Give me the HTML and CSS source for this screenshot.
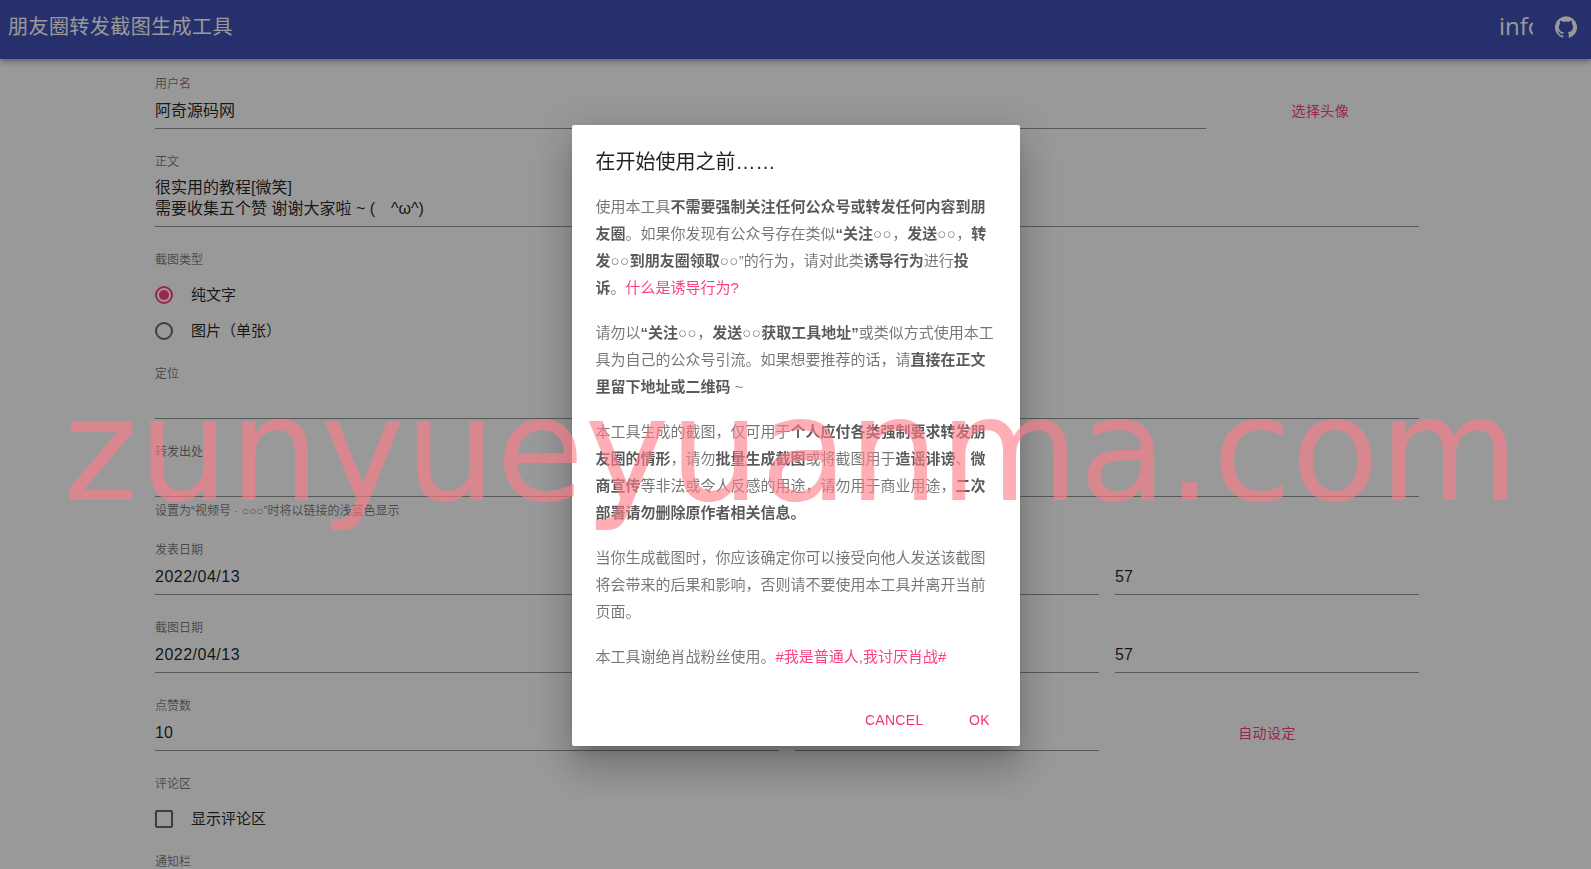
FILE: index.html
```html
<!DOCTYPE html>
<html lang="zh-CN">
  <head>
    <meta charset="UTF-8" />
    <meta name="viewport" content="width=device-width, initial-scale=1.0" />
    <title>朋友圈转发截图生成工具</title>
    <link rel="stylesheet" href="styles.css">
  </head>
  <body>
    <header class="appbar">
      <h1 class="appbar-title">朋友圈转发截图生成工具</h1>
      <span class="appbar-info">info</span>
      <svg class="appbar-github" viewBox="0 0 24 24">
        <path d="M12 .3a12 12 0 0 0-3.8 23.4c.6.1.8-.3.8-.6v-2c-3.3.7-4-1.6-4-1.6-.6-1.4-1.4-1.8-1.4-1.8-1-.7.1-.7.1-.7 1.2 0 1.9 1.2 1.9 1.2 1 1.8 2.8 1.3 3.5 1 0-.8.4-1.3.7-1.6-2.7-.3-5.5-1.3-5.5-6 0-1.2.5-2.3 1.3-3.1-.2-.4-.6-1.6 0-3.2 0 0 1-.3 3.4 1.2a11.5 11.5 0 0 1 6 0c2.3-1.5 3.3-1.2 3.3-1.2.6 1.6.2 2.8 0 3.2.9.8 1.3 1.9 1.3 3.2 0 4.6-2.8 5.6-5.5 5.9.5.4.9 1 .9 2.2v3.3c0 .3.1.7.8.6A12 12 0 0 0 12 .3" />
      </svg>
    </header>

    <main class="form">
      <div class="row">
        <div class="field span-10">
          <label class="field-label">用户名</label>
          <div class="field-value">阿奇源码网</div>
        </div>
        <div class="action span-2"><a class="text-button">选择头像</a></div>
      </div>

      <div class="row">
        <div class="field span-12">
          <label class="field-label">正文</label>
          <div class="field-value multiline">很实用的教程[微笑]<br />需要收集五个赞 谢谢大家啦 ~ (　^ω^)</div>
        </div>
      </div>

      <div class="group">
        <div class="field-label">截图类型</div>
        <div class="choice"><span class="radio checked"></span><span class="choice-text">纯文字</span></div>
        <div class="choice"><span class="radio"></span><span class="choice-text">图片（单张）</span></div>
      </div>

      <div class="row">
        <div class="field span-12">
          <label class="field-label">定位</label>
          <div class="field-value"></div>
        </div>
      </div>

      <div class="row with-help">
        <div class="field span-12">
          <label class="field-label">转发出处</label>
          <div class="field-value"></div>
          <p class="field-help">设置为“视频号 · ○○○”时将以链接的浅蓝色显示</p>
        </div>
      </div>

      <div class="row">
        <div class="field span-6">
          <label class="field-label">发表日期</label>
          <div class="field-value date">2022/04/13</div>
        </div>
        <div class="field span-3">
          <label class="field-label"></label>
          <div class="field-value"></div>
        </div>
        <div class="field span-3">
          <label class="field-label"></label>
          <div class="field-value">57</div>
        </div>
      </div>

      <div class="row">
        <div class="field span-6">
          <label class="field-label">截图日期</label>
          <div class="field-value date">2022/04/13</div>
        </div>
        <div class="field span-3">
          <label class="field-label"></label>
          <div class="field-value"></div>
        </div>
        <div class="field span-3">
          <label class="field-label"></label>
          <div class="field-value">57</div>
        </div>
      </div>

      <div class="row">
        <div class="field span-6">
          <label class="field-label">点赞数</label>
          <div class="field-value">10</div>
        </div>
        <div class="field span-3">
          <label class="field-label"></label>
          <div class="field-value"></div>
        </div>
        <div class="action span-3"><a class="text-button">自动设定</a></div>
      </div>

      <div class="group">
        <div class="field-label">评论区</div>
        <div class="choice"><span class="checkbox"></span><span class="choice-text">显示评论区</span></div>
      </div>

      <div class="group">
        <div class="field-label">通知栏</div>
      </div>
    </main>

    <div class="backdrop">
      <section class="dialog">
        <h2 class="dialog-title">在开始使用之前……</h2>
        <div class="dialog-body">
          <p>使用本工具<b>不需要强制关注任何公众号或转发任何内容到朋友圈</b>。如果你发现有公众号存在类似<b>“关注</b><i>○○</i>，<b>发送</b><i>○○</i>，<b>转发</b><i>○○</i><b>到朋友圈领取</b><i>○○</i>”的行为，请对此类<b>诱导行为</b>进行<b>投诉</b>。<a>什么是诱导行为?</a></p>
          <p>请勿以<b>“关注</b><i>○○</i>，<b>发送</b><i>○○</i><b>获取工具地址”</b>或类似方式使用本工具为自己的公众号引流。如果想要推荐的话，请<b>直接在正文里留下地址或二维码</b> ~</p>
          <p>本工具生成的截图，仅可用于<b>个人应付各类强制要求转发朋友圈的情形</b>，请勿<b>批量生成截图</b>或将截图用于<b>造谣诽谤</b>、<b>微商宣传</b>等非法或令人反感的用途，请勿用于商业用途，<b>二次部署请勿删除原作者相关信息。</b></p>
          <p>当你生成截图时，你应该确定你可以接受向他人发送该截图将会带来的后果和影响，否则请不要使用本工具并离开当前页面。</p>
          <p>本工具谢绝肖战粉丝使用。<a>#我是普通人,我讨厌肖战#</a></p>
        </div>
        <div class="dialog-actions">
          <button class="dialog-button">Cancel</button>
          <button class="dialog-button">OK</button>
        </div>
      </section>
    </div>

    <div class="watermark">zunyueyuanma.com</div>
  </body>
</html>
```

FILE: styles.css
```css
html,
body {
  height: 100%;
}

body {
  margin: 0;
  overflow: hidden;
  background-color: white;
  font-family: "Liberation Sans", "Noto Sans CJK SC", sans-serif;
  color: rgba(0, 0, 0, 0.87);
}

.appbar {
  display: flex;
  align-items: center;
  height: 59px;
  padding: 0 14px 5px 8px;
  box-sizing: border-box;
  background-color: #3f51b5;
  color: white;
  box-shadow: 0 2px 4px -1px rgba(0, 0, 0, 0.2), 0 4px 5px rgba(0, 0, 0, 0.14), 0 1px 10px rgba(0, 0, 0, 0.12);
}

.appbar-title {
  flex: 1;
  margin: 0;
  padding-bottom: 4px;
  font-size: 20px;
  font-weight: 400;
  letter-spacing: 0.45px;
}

.appbar-info {
  width: 34px;
  padding-bottom: 4px;
  overflow: hidden;
  font-family: "Open Sans", sans-serif;
  font-size: 24px;
}

.appbar-github {
  width: 22px;
  height: 22px;
  margin-left: 22px;
  fill: white;
}

.form {
  display: flex;
  flex-direction: column;
  gap: 25px;
  padding: 17px 172px 0 155px;
}

.row {
  display: grid;
  grid-template-columns: repeat(12, 1fr);
  column-gap: 16px;
}

.row.with-help {
  margin-bottom: -2px;
}

.span-2 {
  grid-column: span 2;
}

.span-3 {
  grid-column: span 3;
}

.span-6 {
  grid-column: span 6;
}

.span-10 {
  grid-column: span 10;
}

.span-12 {
  grid-column: span 12;
}

.field-label {
  display: block;
  height: 16px;
  font-size: 12px;
  line-height: 16px;
  color: rgba(0, 0, 0, 0.54);
}

.field-value {
  box-sizing: border-box;
  min-height: 37px;
  padding-top: 7px;
  border-bottom: 1px solid rgba(0, 0, 0, 0.42);
  font-size: 16px;
  line-height: 24px;
}

.field-value.date {
  letter-spacing: 0.5px;
}

.field-value.multiline {
  min-height: 57px;
  padding-top: 7px;
  padding-bottom: 7px;
  line-height: 21px;
}

.field-help {
  margin: 6px 0 0;
  font-size: 12px;
  line-height: 16px;
  color: rgba(0, 0, 0, 0.54);
}

.action {
  display: flex;
  align-items: flex-end;
  justify-content: center;
  padding-bottom: 8px;
}

.text-button {
  font-size: 14px;
  line-height: 20px;
  letter-spacing: 0.4px;
  color: #ff4081;
}

.group {
  display: flex;
  flex-direction: column;
  margin-bottom: 1px;
}

.choice {
  display: flex;
  align-items: center;
  gap: 18px;
  height: 18px;
  margin-top: 18px;
}

.choice-text {
  margin-top: -4px;
  font-size: 15px;
}

.radio {
  box-sizing: border-box;
  display: flex;
  align-items: center;
  justify-content: center;
  width: 18px;
  height: 18px;
  border: 2px solid rgba(0, 0, 0, 0.6);
  border-radius: 50%;
}

.radio.checked {
  border-color: #ff4081;
}

.radio.checked::after {
  content: "";
  width: 10px;
  height: 10px;
  border-radius: 50%;
  background-color: #ff4081;
}

.checkbox {
  box-sizing: border-box;
  width: 18px;
  height: 18px;
  border: 2px solid rgba(0, 0, 0, 0.6);
  border-radius: 2px;
}

.backdrop {
  position: fixed;
  inset: 0;
  display: flex;
  align-items: center;
  justify-content: center;
  padding-top: 2px;
  background-color: rgba(0, 0, 0, 0.4);
}

.dialog {
  width: 448px;
  height: 621px;
  box-sizing: border-box;
  border-radius: 2px;
  background-color: white;
  box-shadow: 0 11px 15px -7px rgba(0, 0, 0, 0.2), 0 24px 38px 3px rgba(0, 0, 0, 0.14), 0 9px 46px 8px rgba(0, 0, 0, 0.12);
}

.dialog-title {
  margin: 0;
  padding: 21px 24px 15px;
  font-size: 20px;
  font-weight: 400;
  line-height: 32px;
}

.dialog-body {
  padding: 0 24px;
  font-size: 15px;
  line-height: 27px;
  color: rgba(0, 0, 0, 0.54);
}

.dialog-body p {
  margin: 0 0 18px;
}

.dialog-body b {
  color: rgba(0, 0, 0, 0.65);
}

.dialog-body i {
  font-style: normal;
  letter-spacing: 0.5px;
}

.dialog-body a {
  color: #ff4081;
}

.dialog-actions {
  display: flex;
  justify-content: flex-end;
  gap: 16px;
  padding: 14px 8px 0;
}

.dialog-button {
  min-width: 64px;
  padding: 6px 8px;
  border: none;
  background: none;
  font-family: "Liberation Sans", sans-serif;
  font-size: 14px;
  line-height: 24px;
  letter-spacing: 0.3px;
  text-transform: uppercase;
  color: #f5337a;
}

.watermark {
  position: fixed;
  left: 63px;
  top: 368px;
  font-family: "DejaVu Sans", sans-serif;
  font-size: 143.5px;
  line-height: 165px;
  white-space: nowrap;
  color: rgba(255, 125, 135, 0.62);
  pointer-events: none;
}
```
